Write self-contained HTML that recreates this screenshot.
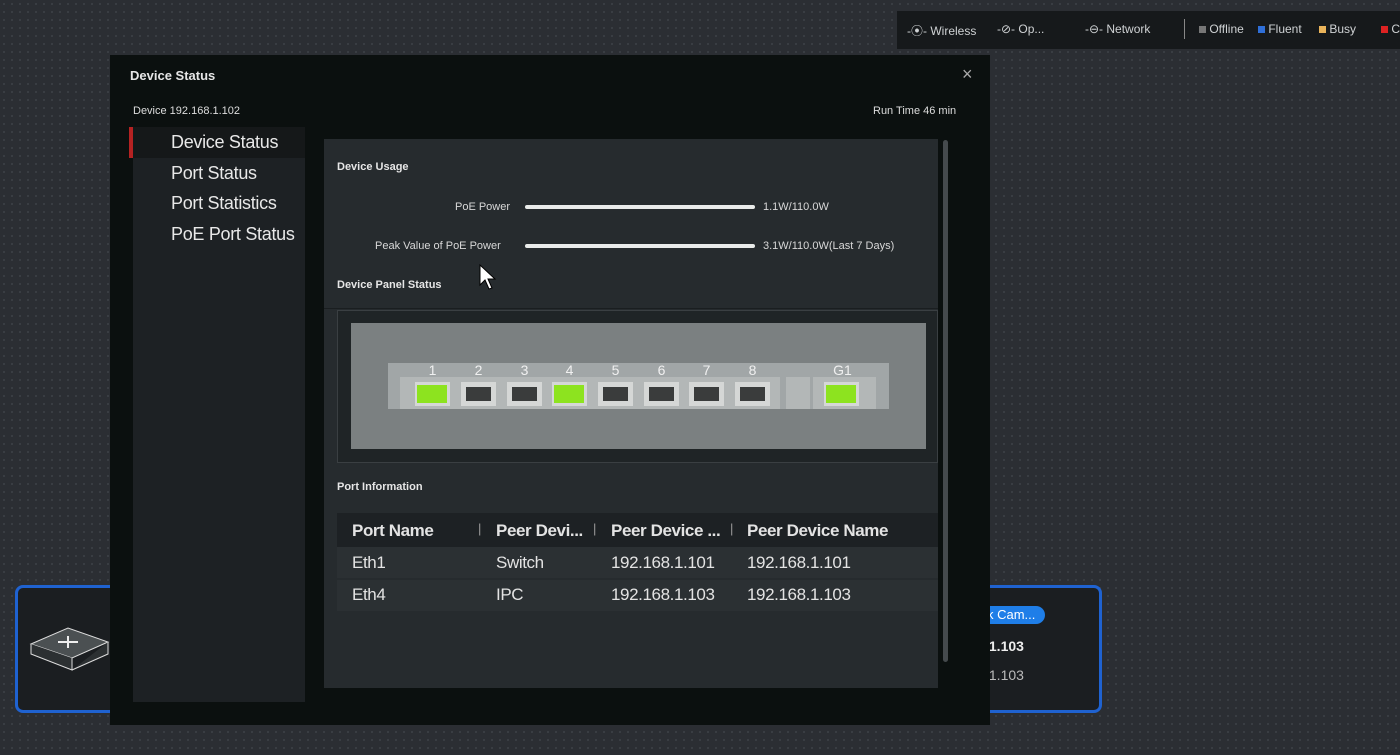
<!DOCTYPE html>
<html><head><meta charset="utf-8"><style>
*{margin:0;padding:0;box-sizing:border-box}
body{width:1400px;height:755px;overflow:hidden;background:#2b2e33;background-image:radial-gradient(#3a3e44 1px,transparent 1.2px);background-size:8px 8px;font-family:"Liberation Sans",sans-serif;color:#e6e6e6;position:relative}
.a{position:absolute;white-space:nowrap}
.top{left:897px;top:11px;width:503px;height:38px;background:#16191b;font-size:12px;color:#cfd2d4}
.top span{position:absolute;top:11px}
.modal{left:110px;top:55px;width:880px;height:670px;background:#0b100f}
.side{left:133px;top:127px;width:172px;height:575px;background:#1d2124}
.side div{position:absolute;left:38px;font-size:18px;color:#e8e8e8;letter-spacing:-0.3px}
.panel{left:324px;top:139px;width:614px;height:549px;background:#262b2e}
.lbl{font-size:11px;color:#d8d8d8}
.bar{height:4px;background:#e9ebea;border-radius:2px}
.tbl div{position:absolute;font-size:17px;color:#e3e3e3;white-space:nowrap;letter-spacing:-0.4px}
.port{position:absolute;top:382px;width:35px;height:24px;background:#d5d7d6}
.port i{position:absolute;left:5px;top:5px;width:25px;height:14px;background:#3a3c3c}
.port.g i{background:#8de31f;left:2px;top:3px;width:30px;height:18px}
.num{position:absolute;top:362px;font-size:14px;color:#f0f0f0;width:35px;text-align:center}
</style></head><body>
<div class="a top">
<span style="left:10px">-⦿- Wireless</span><span style="left:100px">-⊘- Op...</span><span style="left:188px">-⊖- Network</span>
<span style="left:287px;top:8px;width:1px;height:20px;background:#888"></span>
<span style="left:302px"><b style="display:inline-block;width:7px;height:7px;background:#777"></b> Offline</span>
<span style="left:361px"><b style="display:inline-block;width:7px;height:7px;background:#2f6fd8"></b> Fluent</span>
<span style="left:422px"><b style="display:inline-block;width:7px;height:7px;background:#e9b35a"></b> Busy</span>
<span style="left:484px"><b style="display:inline-block;width:7px;height:7px;background:#d22"></b> C</span>
</div>
<div class="a" style="left:15px;top:585px;width:110px;height:128px;border:3px solid #1f62d0;border-radius:8px;background:#1b1e21"></div>
<svg class="a" style="left:28px;top:622px" width="85" height="55" viewBox="0 0 85 55"><path d="M3 22 L40 6 L80 20 L44 36 Z" fill="#4b5052" stroke="#ddd"/><path d="M3 22 V32 L44 48 V36 M44 48 L80 32 V20" fill="#2c3032" stroke="#ddd"/><path d="M30 20 h20 M40 14 v12" stroke="#eee" stroke-width="2"/></svg>
<div class="a" style="left:975px;top:585px;width:127px;height:128px;border:3px solid #1f62d0;border-radius:8px;background:#1b1e21"></div>
<div class="a" style="left:975px;top:606px;width:70px;height:18px;background:#1f7ee8;border-radius:9px;font-size:13px;color:#fff;padding:1px 0 0 12px">k Cam...</div>
<div class="a" style="left:985px;top:638px;font-size:14px;font-weight:bold;color:#eee">.1.103</div>
<div class="a" style="left:985px;top:667px;font-size:14px;color:#bbb">.1.103</div>
<div class="a modal"></div>
<div class="a" style="left:130px;top:68px;font-size:13px;font-weight:bold">Device Status</div>
<div class="a" style="left:962px;top:64px;font-size:18px;color:#aaa">×</div>
<div class="a" style="left:133px;top:105px;font-size:11px;color:#ddd">Device 192.168.1.102</div>
<div class="a" style="left:873px;top:105px;font-size:11px;color:#ddd">Run Time 46 min</div>
<div class="a side">
<div style="left:0;top:0;width:172px;height:31px;background:#151819"></div>
<div style="left:-4px;top:0;width:4px;height:31px;background:#b52222"></div>
<div style="top:5px">Device Status</div><div style="top:36px">Port Status</div><div style="top:66px">Port Statistics</div><div style="top:97px">PoE Port Status</div>
</div>
<div class="a panel"></div>
<div class="a" style="left:943px;top:140px;width:5px;height:522px;background:#454a4d;border-radius:3px"></div>
<div class="a" style="left:337px;top:161px;font-size:11px;font-weight:bold">Device Usage</div>
<div class="a lbl" style="left:455px;top:201px">PoE Power</div>
<div class="a bar" style="left:525px;top:205px;width:230px"></div>
<div class="a lbl" style="left:763px;top:201px">1.1W/110.0W</div>
<div class="a lbl" style="left:375px;top:240px">Peak Value of PoE Power</div>
<div class="a bar" style="left:525px;top:244px;width:230px"></div>
<div class="a lbl" style="left:763px;top:240px">3.1W/110.0W(Last 7 Days)</div>
<div class="a" style="left:337px;top:279px;font-size:11px;font-weight:bold">Device Panel Status</div>
<div class="a" style="left:324px;top:308px;width:614px;height:1px;background:#1a1e20"></div>
<div class="a" style="left:337px;top:310px;width:601px;height:153px;background:#1f2426;border:1px solid #3a3f42"></div>
<div class="a" style="left:351px;top:323px;width:575px;height:126px;background:#7b8081"></div>
<div class="a" style="left:388px;top:363px;width:501px;height:46px;background:#a1a6a7"></div>
<div class="a" style="left:400px;top:377px;width:380px;height:32px;background:#b3b7b7"></div>
<div class="a" style="left:786px;top:377px;width:24px;height:32px;background:#b3b7b7"></div>
<div class="a" style="left:813px;top:377px;width:63px;height:32px;background:#b3b7b7"></div>
<div class="num" style="left:415px">1</div><div class="num" style="left:461px">2</div><div class="num" style="left:507px">3</div><div class="num" style="left:552px">4</div><div class="num" style="left:598px">5</div><div class="num" style="left:644px">6</div><div class="num" style="left:689px">7</div><div class="num" style="left:735px">8</div><div class="num" style="left:825px">G1</div>
<div class="port g" style="left:415px"><i></i></div><div class="port" style="left:461px"><i></i></div><div class="port" style="left:507px"><i></i></div><div class="port g" style="left:552px"><i></i></div><div class="port" style="left:598px"><i></i></div><div class="port" style="left:644px"><i></i></div><div class="port" style="left:689px"><i></i></div><div class="port" style="left:735px"><i></i></div><div class="port g" style="left:824px"><i></i></div>
<div class="a" style="left:337px;top:481px;font-size:11px;font-weight:bold">Port Information</div>
<div class="a" style="left:337px;top:513px;width:601px;height:34px;background:#1d2124"></div>
<div class="a" style="left:337px;top:547px;width:601px;height:31px;background:#2b3033"></div>
<div class="a" style="left:337px;top:580px;width:601px;height:31px;background:#2b3033"></div>
<div class="a tbl">
<div style="left:352px;top:521px;font-weight:bold">Port Name</div><div style="left:478px;top:521px;color:#999;font-size:13px">|</div>
<div style="left:496px;top:521px;font-weight:bold">Peer Devi...</div><div style="left:593px;top:521px;color:#999;font-size:13px">|</div>
<div style="left:611px;top:521px;font-weight:bold">Peer Device ...</div><div style="left:730px;top:521px;color:#999;font-size:13px">|</div>
<div style="left:747px;top:521px;font-weight:bold">Peer Device Name</div>
<div style="left:352px;top:553px">Eth1</div><div style="left:496px;top:553px">Switch</div><div style="left:611px;top:553px">192.168.1.101</div><div style="left:747px;top:553px">192.168.1.101</div>
<div style="left:352px;top:585px">Eth4</div><div style="left:496px;top:585px">IPC</div><div style="left:611px;top:585px">192.168.1.103</div><div style="left:747px;top:585px">192.168.1.103</div>
</div>
<svg class="a" style="left:478px;top:263px" width="20" height="28"><path d="M2 2 V22 L7 17 L11 26 L14 25 L10 16 H17 Z" fill="#fff" stroke="#000"/></svg>
</body></html>
